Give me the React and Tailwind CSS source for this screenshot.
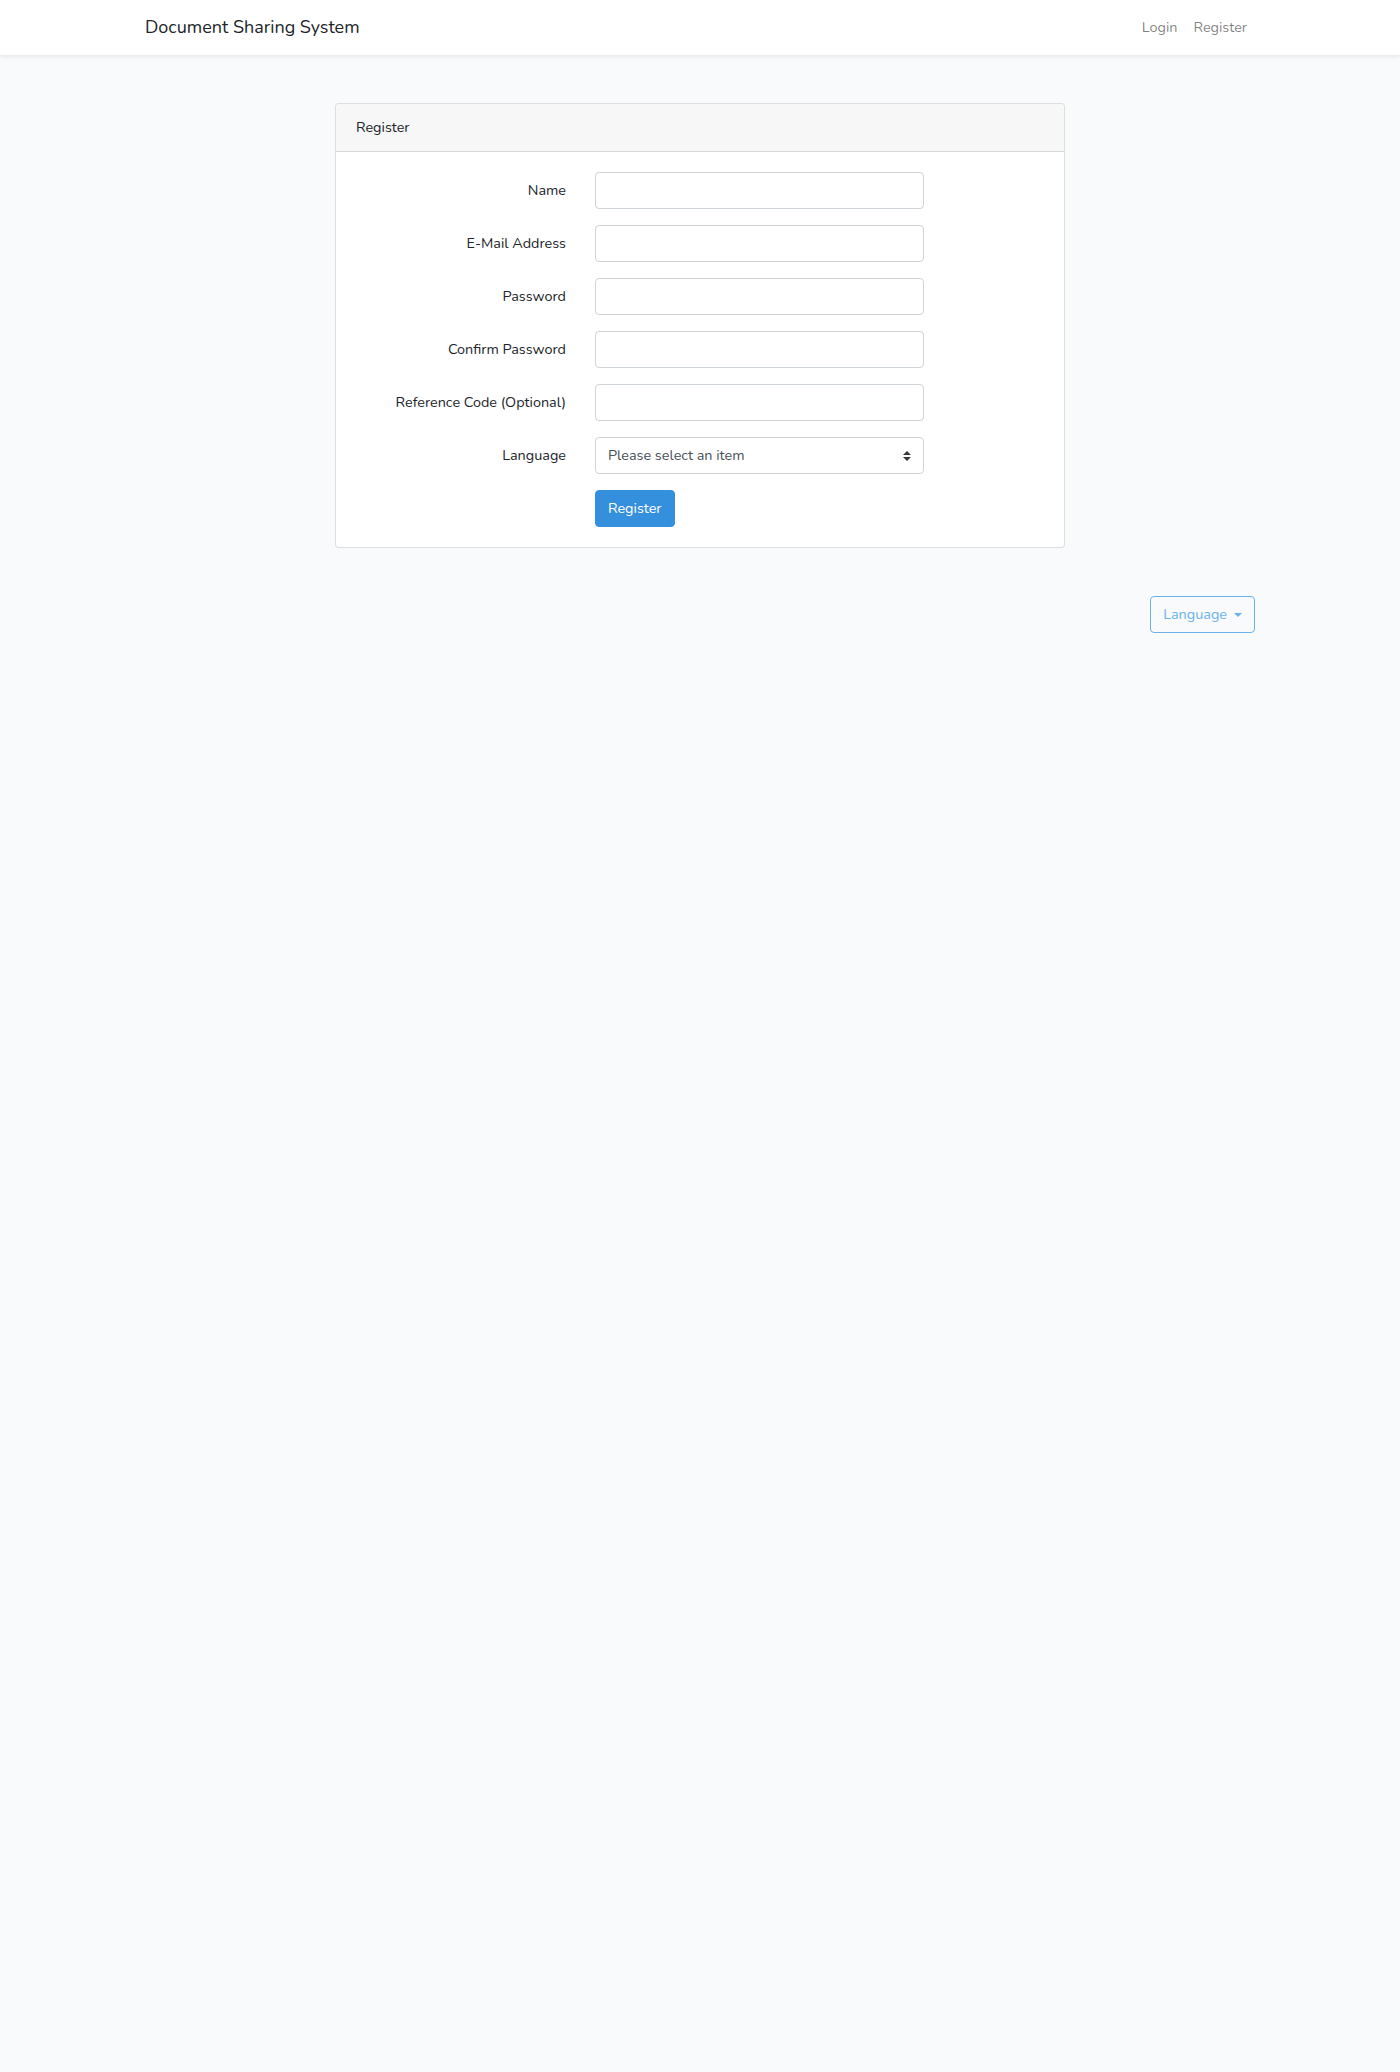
import React from "react";

const fields = [
  { label: "Name", type: "text" },
  { label: "E-Mail Address", type: "email" },
  { label: "Password", type: "password" },
  { label: "Confirm Password", type: "password" },
  { label: "Reference Code (Optional)", type: "text" },
];

const App = () => {
  return (
    <div
      className="min-h-[2072px] bg-[#f8fafc] text-[#212529] text-[14.4px] leading-[1.6]"
      style={{ fontFamily: "Nunito, Lato, 'Noto Sans', sans-serif" }}
    >
      {/* Navbar */}
      <nav className="bg-white h-[55px] shadow-[0_2px_4px_rgba(0,0,0,0.075)]">
        <div className="w-[1140px] mx-auto px-[15px] h-full flex items-center justify-between">
          <a className="text-[18px] text-[#212529]">Document Sharing System</a>
          <div className="flex">
            <a className="px-2 text-[rgba(0,0,0,0.5)]">Login</a>
            <a className="px-2 text-[rgba(0,0,0,0.5)]">Register</a>
          </div>
        </div>
      </nav>

      <main className="pt-[48px]">
        <div className="w-[730px] mx-auto bg-white border border-[rgba(0,0,0,0.125)] rounded-[4px]">
          <div className="px-5 py-3 bg-[#f7f7f7] border-b border-[rgba(0,0,0,0.125)] rounded-t-[4px]">
            Register
          </div>
          <div className="p-5">
            {fields.map((f) => (
              <div key={f.label} className="flex items-center gap-[29px] mb-4">
                <label className="w-[210px] text-right">{f.label}</label>
                <input
                  type={f.type}
                  className="appearance-none w-[329px] h-[37px] px-3 bg-white border border-[#ced4da] rounded-[4px] outline-none"
                />
              </div>
            ))}

            <div className="flex items-center gap-[29px] mb-4">
              <label className="w-[210px] text-right">Language</label>
              <div className="relative w-[329px] h-[37px] px-3 flex items-center border border-[#ced4da] rounded-[4px] text-[#495057]">
                <span>Please select an item</span>
                <svg
                  className="absolute right-[12px] top-1/2 -translate-y-1/2"
                  width="8"
                  height="10"
                  viewBox="0 0 4 5"
                >
                  <path fill="#343a40" d="M2 0L0 2h4zm0 5L0 3h4z" />
                </svg>
              </div>
            </div>

            <div className="flex gap-[29px]">
              <div className="w-[210px]" />
              <button className="h-[37px] px-3 bg-[#3490dc] text-white border border-[#3490dc] rounded-[4px]">
                Register
              </button>
            </div>
          </div>
        </div>

        {/* Language switcher */}
        <div className="w-[1140px] mx-auto px-[15px] mt-[48px] flex justify-end">
          <button className="h-[37px] px-3 flex items-center border border-[#6cb2eb] text-[#6cb2eb] rounded-[4px] bg-transparent">
            Language
            <span className="ml-[7px] inline-block w-0 h-0 border-l-[4.5px] border-r-[4.5px] border-t-[4.5px] border-l-transparent border-r-transparent border-t-[#6cb2eb]" />
          </button>
        </div>
      </main>
    </div>
  );
};

export default App;
